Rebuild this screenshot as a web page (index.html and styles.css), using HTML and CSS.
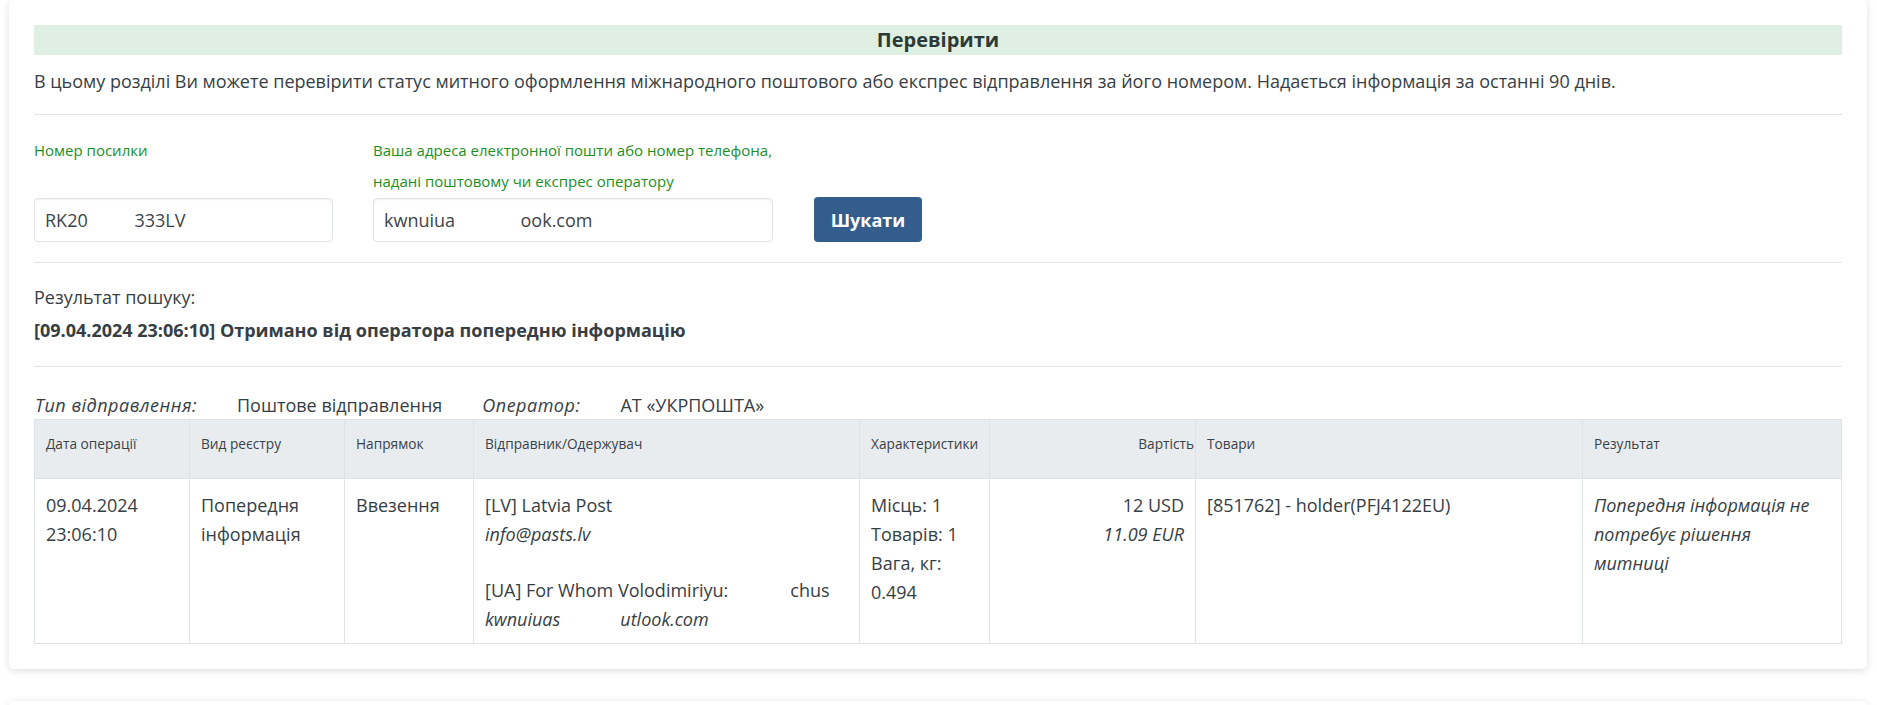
FILE: index.html
```html
<!DOCTYPE html>
<html lang="uk">
<head>
<meta charset="utf-8">
<title>Перевірити</title>
<link rel="stylesheet" href="styles.css">
</head>
<body>
<main class="page">
  <section class="card">
    <h2 class="title-bar">Перевірити</h2>
    <p class="intro">В цьому розділі Ви можете перевірити статус митного оформлення міжнародного поштового або експрес відправлення за його номером. Надається інформація за останні 90 днів.</p>
    <hr class="divider divider-intro">

    <form class="search-form">
      <div class="field field-number">
        <label class="field-label" for="parcel">Номер посилки</label>
        <input class="field-input" id="parcel" type="text" value="RK20          333LV">
      </div>
      <div class="field field-contact">
        <label class="field-label" for="contact">Ваша адреса електронної пошти або номер телефона,<br>надані поштовому чи експрес оператору</label>
        <input class="field-input" id="contact" type="text" value="kwnuiua              ook.com">
      </div>
      <button class="btn-search" type="button">Шукати</button>
    </form>
    <hr class="divider divider-form">

    <div class="result">
      <div class="result-caption">Результат пошуку:</div>
      <div class="result-status">[09.04.2024 23:06:10] Отримано від оператора попередню інформацію</div>
    </div>
    <hr class="divider divider-result">

    <div class="meta-row">
      <span class="meta-label">Тип відправлення:</span>
      <span class="meta-value">Поштове відправлення</span>
      <span class="meta-label">Оператор:</span>
      <span class="meta-value">АТ «УКРПОШТА»</span>
    </div>

    <table class="ops-table">
      <colgroup>
        <col class="c-date">
        <col class="c-kind">
        <col class="c-dir">
        <col class="c-party">
        <col class="c-spec">
        <col class="c-cost">
        <col class="c-goods">
        <col class="c-result">
      </colgroup>
      <thead>
        <tr>
          <th>Дата операції</th>
          <th>Вид реєстру</th>
          <th>Напрямок</th>
          <th>Відправник/Одержувач</th>
          <th>Характеристики</th>
          <th class="num num-head">Вартість</th>
          <th>Товари</th>
          <th>Результат</th>
        </tr>
      </thead>
      <tbody>
        <tr>
          <td>09.04.2024<br>23:06:10</td>
          <td>Попередня інформація</td>
          <td>Ввезення</td>
          <td>
            <div class="party">[LV] Latvia Post<br><em>info@pasts.lv</em></div>
            <div class="party party-to"><span class="line">[UA] For Whom Volodimiriyu:<span class="gap-a"></span>chus</span><br><em class="line">kwnuiuas<span class="gap-b"></span>utlook.com</em></div>
          </td>
          <td>Місць: 1<br>Товарів: 1<br>Вага, кг:<br>0.494</td>
          <td class="num">12 USD<br><em>11.09 EUR</em></td>
          <td>[851762] - holder(PFJ4122EU)</td>
          <td class="result-cell"><em>Попередня інформація не потребує рішення митниці</em></td>
        </tr>
      </tbody>
    </table>
  </section>

  <section class="card card-next"></section>
</main>
</body>
</html>
```

FILE: styles.css
```css
html, body {
  margin: 0;
  padding: 0;
  background: #ffffff;
}

body {
  font-family: "Open Sans", "Noto Sans", sans-serif;
  font-size: 18px;
  color: #363e44;
}

.page {
  padding: 0 10px 0 9px;
  display: flex;
  flex-direction: column;
  gap: 32px;
}

.card {
  background: #fff;
  border-radius: 5px;
  box-shadow: 0 2px 8px rgba(0, 0, 0, 0.13);
  padding: 25px;
}

.card-next {
  min-height: 120px;
  padding: 0;
}

.title-bar {
  margin: 0;
  height: 30px;
  line-height: 30px;
  background: #dff0e3;
  text-align: center;
  font-size: 20px;
  font-weight: 700;
  color: #2d3a37;
}

.intro {
  margin: 12px 0 0;
  line-height: 28px;
}

.divider {
  border: 0;
  border-top: 1px solid #e3e5e7;
  margin: 0;
}

.divider-intro { margin-top: 19px; }

/* search form */
.search-form {
  display: flex;
  align-items: flex-end;
  gap: 40px;
  margin-top: 20px;
}

.field {
  display: flex;
  flex-direction: column;
}

.field-number { width: 299px; }
.field-contact { width: 400px; }

.field-label {
  height: 62px;
  margin-bottom: 1px;
  color: #1c8f1c;
  font-size: 15px;
  line-height: 31px;
}

.field-input {
  box-sizing: border-box;
  height: 44px;
  padding: 0 10px;
  font: inherit;
  font-size: 18px;
  color: #3d4449;
  border: 1px solid #dfe3e6;
  border-radius: 4px;
  box-shadow: inset 0 1px 2px rgba(0, 0, 0, 0.06);
}

.btn-search {
  box-sizing: border-box;
  width: 108px;
  height: 45px;
  margin-left: 1px;
  border: 0;
  border-radius: 4px;
  background: #335d8c;
  color: #fff;
  font: inherit;
  font-size: 18px;
  font-weight: 700;
}

.divider-form { margin-top: 20px; }

/* result text */
.result {
  margin-top: 18px;
  line-height: 33px;
}

.result-status {
  font-weight: 700;
}

.divider-result { margin-top: 19px; }

.meta-row {
  display: flex;
  gap: 40px;
  margin-top: 24px;
  line-height: 28px;
  padding-left: 1px;
}

.meta-label {
  font-style: italic;
  letter-spacing: 0.5px;
}

/* operations table */
.ops-table {
  width: 100%;
  table-layout: fixed;
  border-collapse: collapse;
  border: 1px solid #dee2e6;
}

.c-date { width: 155px; }
.c-kind { width: 155px; }
.c-dir { width: 129px; }
.c-party { width: 386px; }
.c-spec { width: 130px; }
.c-cost { width: 206px; }
.c-goods { width: 387px; }

.ops-table th {
  background: #e9ecef;
  height: 58px;
  box-sizing: border-box;
  padding: 12px 11px 22px;
  font-size: 13.7px;
  line-height: 24px;
  font-weight: 400;
  text-align: left;
  vertical-align: top;
  border: 1px solid #dee2e6;
  color: #3a4247;
  white-space: nowrap;
}

.ops-table td {
  height: 165px;
  box-sizing: border-box;
  padding: 12px 11px 5px;
  line-height: 29px;
  vertical-align: top;
  border: 1px solid #dee2e6;
}

.ops-table .num {
  text-align: right;
}

.ops-table .num-head {
  padding-right: 1px;
}

.ops-table .result-cell {
  padding-right: 18px;
}

.party-to {
  margin-top: 27px;
}

.line {
  white-space: nowrap;
}

.gap-a {
  display: inline-block;
  width: 62px;
}

.gap-b {
  display: inline-block;
  width: 60px;
}
```
